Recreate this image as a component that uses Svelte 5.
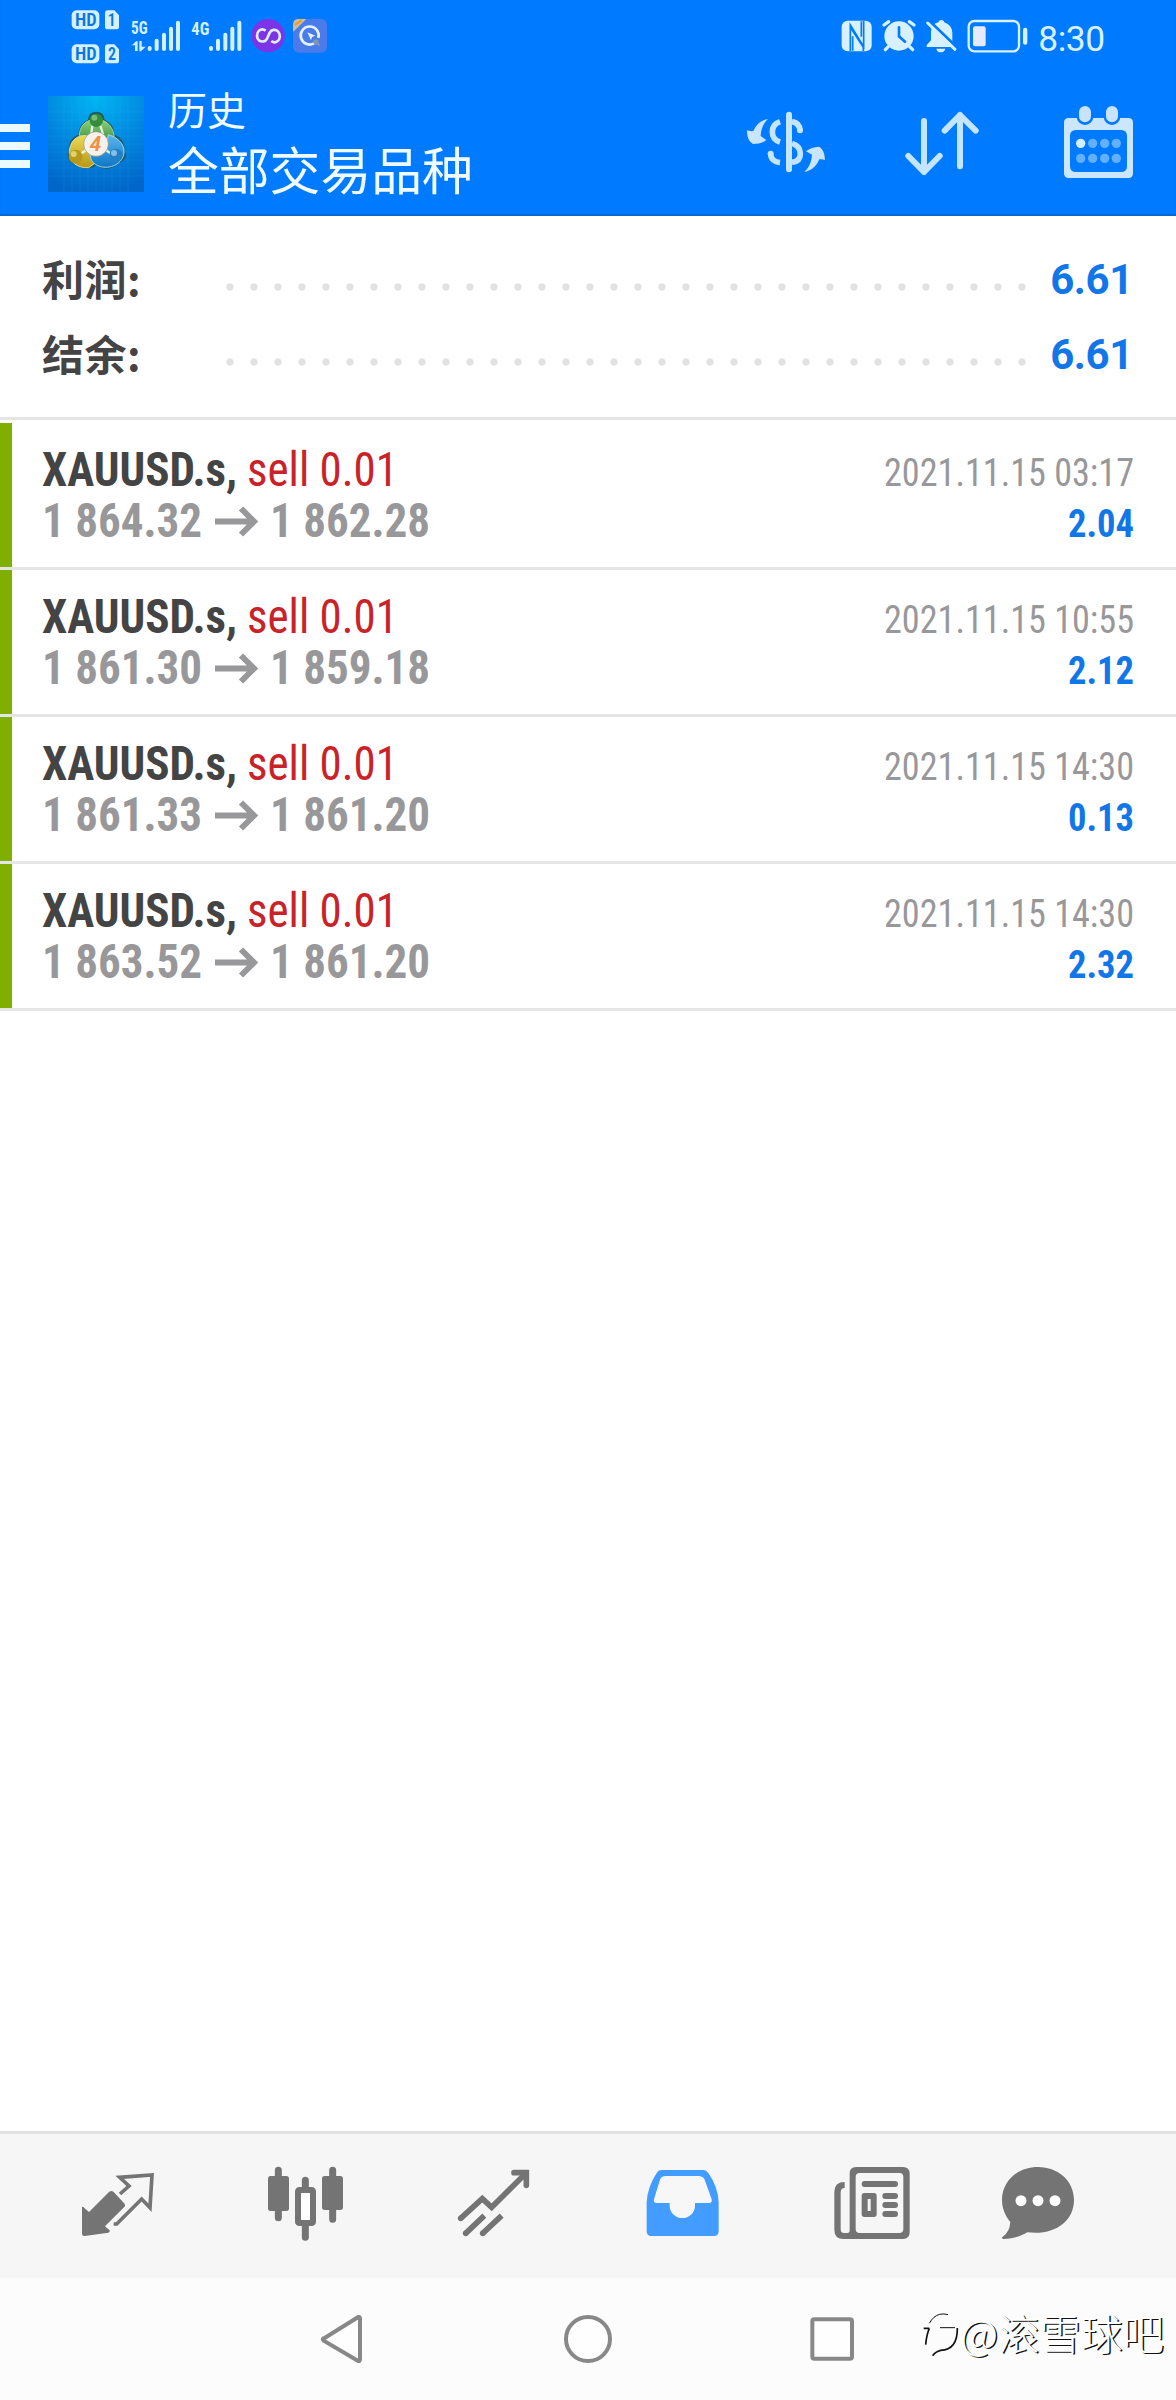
<script>
	const summary = [
		{ label: '利润:', value: '6.61' },
		{ label: '结余:', value: '6.61' }
	];

	const deals = [
		{ open: '1 864.32', close: '1 862.28', time: '2021.11.15 03:17', profit: '2.04' },
		{ open: '1 861.30', close: '1 859.18', time: '2021.11.15 10:55', profit: '2.12' },
		{ open: '1 861.33', close: '1 861.20', time: '2021.11.15 14:30', profit: '0.13' },
		{ open: '1 863.52', close: '1 861.20', time: '2021.11.15 14:30', profit: '2.32' }
	];

	const calendarDots = [1082, 1118, 1154, 1189];
</script>

<main class="screen">
	<header class="header">
		<div class="status">
			<svg width="300" height="72" viewBox="0 0 900 216" fill="#d3f0ff">
				<rect x="65" y="31" width="83" height="57" rx="15" />
				<rect x="65" y="133" width="83" height="57" rx="15" />
				<path d="M173 31h20l14 15v34q0 8-8 8h-26q-8 0-8-8v-41q0-8 8-8zM173 133h20l14 15v34q0 8-8 8h-26q-8 0-8-8v-41q0-8 8-8z" />
				<g class="badge">
					<text x="75" y="79" textLength="65" lengthAdjust="spacingAndGlyphs">HD</text>
					<text x="75" y="181" textLength="65" lengthAdjust="spacingAndGlyphs">HD</text>
					<text x="173" y="79" textLength="24" lengthAdjust="spacingAndGlyphs">1</text>
					<text x="174" y="181" textLength="24" lengthAdjust="spacingAndGlyphs">2</text>
				</g>
				<g class="net">
					<text x="243" y="102" textLength="50" lengthAdjust="spacingAndGlyphs">5G</text>
					<text x="424" y="104" textLength="54" lengthAdjust="spacingAndGlyphs">4G</text>
				</g>
				<path d="M244 137l14-13h5v29h-8v-17h-11zM268 123h7v17h12l-14 14h-5z" />
				<g stroke="#d3f0ff" stroke-width="12" stroke-linecap="round">
					<path d="M299 144v3M320 122v25M342 104v43M363 86v61M384 68v79" />
					<path d="M483 144v3M504 122v25M526 104v43M547 86v61M568 68v79" />
				</g>
				<circle cx="654" cy="107" r="50" fill="#7c35e6" />
				<path d="M647 92c-7-5-14-5-20 0-8 8-8 22 0 29 8 6 20 4 24-5l8-18c5-10 18-11 25-4 8 9 7 23-1 29-6 5-14 4-19 0" fill="none" stroke="#e2ecff" stroke-width="8" />
				<rect x="729" y="57" width="102" height="101" rx="17" fill="#4b7bea" />
				<path d="M729 96V74q0-17 17-17h23z" fill="#ccbda5" />
				<path d="M734 75l21-14" stroke="#e9a136" stroke-width="8" />
				<path d="M794 129a27 27 0 1 1 11-15" fill="none" stroke="#e5f3ff" stroke-width="8" />
				<path d="M772 97l24 10-10 4-3 10z" fill="#e5f3ff" />
				<circle cx="798" cy="126" r="8" fill="#8396ad" />
				<path d="M802 131l7 5" stroke="#8396ad" stroke-width="6" />
			</svg>
			<svg width="320" height="72" viewBox="0 0 960 216" fill="#d7f1ff">
				<rect x="65" y="62" width="90" height="92" rx="18" />
				<path d="M91 153V75l40 65V63M91 82l39 60V153M98 109v43M124 64v46" fill="none" stroke="#007aff" stroke-width="5" />
				<circle cx="237" cy="108" r="44" />
				<path d="M192 75l14-10M282 75l-14-10M205 140l-9 9M269 140l9 9" stroke="#d7f1ff" stroke-width="10" stroke-linecap="round" />
				<path d="M237 82v27l18 16" fill="none" stroke="#007aff" stroke-width="8" stroke-linecap="round" />
				<path d="M320 141v-6l13-14V96q0-24 22-29 2-7 9-7t9 7q23 8 24 31v25l11 15v3z" />
				<path d="M349 146h27q-3 11-14 11t-13-11z" />
				<path d="M329 64l82 79" stroke="#007aff" stroke-width="9" />
				<path d="M323 69l82 79" stroke="#d7f1ff" stroke-width="9" stroke-linecap="round" />
				<rect x="446" y="63" width="151" height="91" rx="17" fill="none" stroke="#d7f1ff" stroke-width="7" />
				<rect x="459" y="79" width="38" height="60" rx="6" fill="#e5eaff" />
				<rect x="609" y="83" width="13" height="51" rx="6" />
				<text class="clock" x="655" y="152" textLength="200">8:30</text>
			</svg>
		</div>

		<div class="toolbar">
			<div class="menu"><i></i><i></i><i></i></div>
			<svg class="logo" width="96" height="96" viewBox="144 62 288 288">
				<defs>
					<radialGradient id="sky" cx=".5" cy="0" r="1">
						<stop offset="0" stop-color="#00b7f3" />
						<stop offset=".55" stop-color="#0286df" />
						<stop offset="1" stop-color="#0067c9" />
					</radialGradient>
					<linearGradient id="green" x2="0" y2="1">
						<stop offset="0" stop-color="#8ed37c" />
						<stop offset="1" stop-color="#2d8a35" />
					</linearGradient>
					<linearGradient id="gold" x2="0" y2="1">
						<stop offset="0" stop-color="#eadb55" />
						<stop offset="1" stop-color="#b99616" />
					</linearGradient>
					<linearGradient id="blue" x2="0" y2="1">
						<stop offset="0" stop-color="#5db7ee" />
						<stop offset="1" stop-color="#0d76c5" />
					</linearGradient>
				</defs>
				<rect x="144" y="62" width="288" height="288" fill="url(#sky)" />
				<path d="M192 62v288M216 62v288M240 62v288M264 62v288M288 62v288M312 62v288M336 62v288M360 62v288M384 62v288M144 110h288M144 134h288M144 158h288M144 182h288M144 206h288M144 230h288M144 254h288M144 278h288M144 302h288" stroke="#55c4f5" stroke-opacity=".16" stroke-width="2" />
				<path d="M289 112c-15 0-22 10-23 23-20 9-30 27-28 45-21 7-31 25-29 47-9 19 0 32 18 38 18 16 45 16 61 3 22 15 50 13 68-8 20-6 23-20 15-35 1-23-12-40-31-46 2-19-7-34-28-44-1-13-8-23-23-23z" fill="#1c5f6b" stroke="#1c5f6b" stroke-width="5" />
				<g stroke-width="3">
					<path d="M238 181c0-27 18-49 51-49s54 27 53 56l-11 20-43-38-34 16z" fill="url(#green)" stroke="#a9d0a2" />
					<path d="M259 181c-31-3-51 19-51 52 0 28 26 46 58 44l22-16-34-42z" fill="url(#gold)" stroke="#dbd8a4" />
					<path d="M325 178c27 8 48 27 47 52-2 36-43 53-73 43-18-6-28-17-28-34l45-10z" fill="url(#blue)" stroke="#a5d7f3" />
				</g>
				<path d="M277 151l-3 24M301 151l8 25M240 237l19-13M334 237l-17-14" stroke="#e5f2e3" stroke-width="7" />
				<circle cx="289" cy="135" r="20" fill="#338b3b" />
				<circle cx="283" cy="127" r="9" fill="#a6daa2" opacity=".6" />
				<circle cx="227" cy="244" r="21" fill="#b79a1b" />
				<circle cx="221" cy="236" r="9" fill="#f5ea8c" opacity=".7" />
				<circle cx="348" cy="240" r="20" fill="#2181c7" />
				<circle cx="342" cy="233" r="9" fill="#afddf7" opacity=".7" />
				<circle cx="288" cy="206" r="37" fill="#f5f2ee" stroke="#9a8b6b" stroke-width="2" />
				<text class="four" x="269" y="227">4</text>
			</svg>
			<div class="titles">
				<div class="title">历史</div>
				<div class="subtitle">全部交易品种</div>
			</div>
			<div class="actions">
				<svg width="90" height="90" viewBox="63 27 270 270" fill="#c9e4fd">
					<path d="M207 74v164" stroke="#c4e5ff" stroke-width="18" stroke-linecap="round" />
					<path d="M180 95q-23 8-23 31t23 30M216 95c14 2 23 11 24 26M152 191c0 15 10 25 28 27M216 160q25 8 25 31t-25 26" fill="none" stroke="#c4e5ff" stroke-width="17" />
					<circle cx="240" cy="121" r="9" />
					<circle cx="152" cy="191" r="9" />
					<path d="M144 87c-19 3-35 15-44 36-6 1-13 0-19-2 0 18 4 33 18 41 15 0 28-3 40-12l-17-12c1-21 8-38 22-51z" />
					<path d="M253 246c19-3 36-16 45-38 6-1 12 0 17 2-1-18-5-33-18-40-15 1-28 5-39 14l18 10c-1 21-9 38-23 52z" />
				</svg>
				<svg width="90" height="90" viewBox="531 27 270 270" fill="none" stroke="#c4e5ff" stroke-width="18" stroke-linecap="round" stroke-linejoin="round">
					<path d="M612 93v153M565 198l47 48 47-48M720 229V75M674 122l46-47 47 47" />
				</svg>
				<svg width="90" height="90" viewBox="999 27 270 270">
					<path d="M1046 84h179q14 0 14 14v152q0 14-14 14h-179q-14 0-14-14V98q0-14 14-14zM1068 120q-18 0-18 18v90q0 18 18 18h135q18 0 18-18v-90q0-18-18-18z" fill="#cbe6ff" fill-rule="evenodd" />
					<path d="M1095 69v11M1176 69v11" stroke="#007aff" stroke-width="50" stroke-linecap="round" />
					<path d="M1095 66v13M1176 66v13" stroke="#c9e3ff" stroke-width="36" stroke-linecap="round" />
					{#each calendarDots as x, i}
						<circle cx={x} cy="160" r="14" fill={i === 0 ? '#d3efff' : '#62b1ff'} />
						<circle cx={x} cy="205" r="14" fill="#62b1ff" />
					{/each}
				</svg>
			</div>
		</div>
	</header>

	<section class="summary">
		{#each summary as item}
			<div class="total">
				<span class="label">{item.label}</span>
				<span class="dots"></span>
				<span class="value">{item.value}</span>
			</div>
		{/each}
	</section>

	<section class="deals">
		{#each deals as deal}
			<div class="deal">
				<svg width="400" height="144">
					<text class="symbol" x="0" y="63" textLength="195" lengthAdjust="spacingAndGlyphs">XAUUSD.s,</text>
					<text class="side" x="205" y="63" textLength="151" lengthAdjust="spacingAndGlyphs">sell 0.01</text>
					<text class="price" x="0" y="113.500" textLength="160" lengthAdjust="spacingAndGlyphs">{deal.open}</text>
					<path d="M173 98.500h39M199 85.500l13 13-13 13" fill="none" stroke="#98989a" stroke-width="6" />
					<text class="price" x="228" y="113.500" textLength="160" lengthAdjust="spacingAndGlyphs">{deal.close}</text>
				</svg>
				<svg width="272" height="144">
					<text class="time" x="10" y="63" textLength="250" lengthAdjust="spacingAndGlyphs">{deal.time}</text>
					<text class="profit" x="194" y="114" textLength="66" lengthAdjust="spacingAndGlyphs">{deal.profit}</text>
				</svg>
			</div>
		{/each}
	</section>

	<nav class="tabs">
		<!-- quotes -->
		<svg viewBox="60 114 288 288">
			<path d="M96 260q5 0 7 4l14 12 60-60q7-6 14 0l30 32q8 8 1 14l-57 57 14 12q2 6-4 7l-71 10q-8 1-8-7z" />
			<path d="M210 222l27-24-28-26 97-7-6 98-25-26-75 75h-9" fill="none" stroke="#747474" stroke-width="11" />
		</svg>
		<!-- chart -->
		<svg viewBox="624 114 288 288">
			<path d="M685 151v142M848 151v147M766 181v30M766 310v42" stroke="#747474" stroke-width="21" stroke-linecap="round" />
			<rect x="654" y="168" width="63" height="105" rx="8" />
			<rect x="816" y="168" width="63" height="102" rx="8" />
			<rect x="744" y="210" width="45" height="99" rx="4" fill="none" stroke="#747474" stroke-width="18" />
			<rect x="753" y="219" width="27" height="81" rx="8" fill="#fff" />
		</svg>
		<!-- trade -->
		<svg viewBox="48 114 288 288" fill="none" stroke="#747474" stroke-width="17">
			<path d="M92 295l65-59 28 26L286 161" />
			<path d="M252 158h37v38" stroke-linecap="round" />
			<path d="M107 340l56-53M158 340l57-53" />
			<g fill="#747474" stroke="none">
				<circle cx="92" cy="295" r="8.500" />
				<circle cx="107" cy="340" r="8.500" />
				<circle cx="158" cy="340" r="8.500" />
			</g>
		</svg>
		<!-- history -->
		<svg viewBox="612 114 288 288">
			<path d="M694 150h126q9 0 15 9 30 43 31 88v87q0 14-14 14H664q-14 0-14-14v-87q2-45 30-88 5-9 14-9z" fill="#439cff" />
			<path d="M707 168h99q13 0 18 11l21 59q2 11-8 11h-42v8a38 37 0 0 1-76 0v-8h-39q-11 0-8-11l18-59q4-11 17-11z" fill="#f7f7f7" />
		</svg>
		<!-- news -->
		<svg viewBox="126 114 288 288">
			<path d="M228 141h141q20 0 20 20v176q0 20-20 20H191q-28 0-28-28V215q0-29 31-29v18q-12 0-12 13v110q0 12 10 12h10q7 0 7-8V161q0-20 19-20zM239 159q-12 0-12 12v156q0 12 12 12h119q12 0 12-12V171q0-12-12-12z" fill-rule="evenodd" />
			<path d="M254 192h91M316 228h29M316 255h29M316 282h29" stroke="#747474" stroke-width="18" stroke-linecap="round" />
			<path d="M253 219h29q8 0 8 8v56q0 8-8 8h-29q-8 0-8-8v-56q0-8 8-8zM263 237v36h9v-36z" fill-rule="evenodd" />
		</svg>
		<!-- messages -->
		<svg viewBox="630 114 288 288">
			<path d="M774 141c62 0 108 43 108 99 0 63-56 107-140 97-20 12-42 19-72 20q-8-3 0-8 19-14 21-43c-16-19-25-42-25-66 0-58 48-99 108-99z" />
			<g fill="#fff">
				<circle cx="723" cy="242" r="16.500" />
				<circle cx="774" cy="242" r="16.500" />
				<circle cx="825" cy="242" r="16.500" />
			</g>
		</svg>
	</nav>

	<footer class="system">
		<svg viewBox="99 117 180 180">
			<path d="M129 207l106-66q5-1 5 5v122q0 6-5 5L131 212q-5-4 0-8z" />
		</svg>
		<svg viewBox="834 117 180 180">
			<circle cx="924" cy="207" r="66" />
		</svg>
		<svg viewBox="81 117 180 180">
			<rect x="109" y="148" width="119" height="118" rx="6" />
		</svg>
		<div class="mark">
			<svg class="ball" viewBox="435 132 114 144">
				<path d="M440 187h17M457 187q-8 18-11 49M541 186q1 65-50 67-16 4-24 16" />
				<path d="M489 185h45M457 172q12-22 31-27 13-3 25 1" stroke-width="3" />
			</svg>
			<span>@滚雪球吧</span>
		</div>
	</footer>
</main>

<style>
	:global(body) {
		margin: 0;
		background: #fff;
	}

	.screen {
		display: flex;
		flex-direction: column;
		width: 1176px;
		height: 2400px;
		background: #fff;
		font-family: Roboto, "Noto Sans CJK SC", sans-serif;
		overflow: hidden;
	}

	svg {
		display: block;
		flex: none;
	}

	.header {
		height: 216px;
		background: #007aff;
		box-shadow: inset 0 -2px 1px #0869d2;
	}

	.status {
		display: flex;
		justify-content: space-between;
		height: 72px;
		padding: 0 36px 0 50px;
	}

	.badge {
		fill: #0878dd;
		font-size: 56px;
		font-weight: 600;
	}

	.net {
		font-size: 56px;
		font-weight: 700;
	}

	.badge text,
	.net text {
		font-family: "Roboto Condensed", Roboto, sans-serif;
		font-stretch: condensed;
	}

	.clock {
		font-size: 106px;
	}

	.toolbar {
		display: flex;
		align-items: center;
		height: 144px;
	}

	.menu {
		display: flex;
		flex-direction: column;
		gap: 10px;
		width: 30px;
		padding-top: 4px;
		margin-right: 18px;
	}

	.menu i {
		height: 8px;
		background: #ebfaff;
	}

	.four {
		fill: #ee9144;
		font-size: 62px;
		font-weight: 700;
		font-style: italic;
	}

	.titles {
		padding-top: 10px;
		margin-left: 24px;
		color: #f0fbff;
		white-space: nowrap;
	}

	.title {
		font-size: 39px;
		line-height: 48px;
	}

	.subtitle {
		font-size: 50.800px;
		line-height: 74px;
	}

	.actions {
		display: grid;
		grid-template-columns: repeat(3, 156px);
		justify-items: center;
		margin-left: auto;
	}

	.summary {
		height: 175px;
		padding: 26px 43px 0 42px;
		border-bottom: 3px solid #e5e5e5;
	}

	.total {
		display: flex;
		align-items: center;
		height: 75px;
	}

	.label {
		width: 176px;
		margin-top: -5px;
		color: #444;
		font-size: 42px;
		font-weight: 700;
		font-family: "Noto Sans CJK SC", sans-serif;
		letter-spacing: .5px;
		line-height: 75px;
	}

	.dots {
		width: 816px;
		height: 24px;
		margin-top: 15px;
		background: radial-gradient(circle, #e2e2e2 3.2px, transparent 4.2px) 0 0 / 24px 24px;
	}

	.value {
		margin-left: auto;
		color: #1176e8;
		font-size: 42px;
		font-weight: 700;
		letter-spacing: -.4px;
	}

	.deals {
		padding-top: 3px;
	}

	.deal {
		display: flex;
		justify-content: space-between;
		height: 144px;
		padding: 0 30px 0 42px;
		border-bottom: 3px solid #e5e5e5;
		box-shadow: inset 12px 0 #7fb000;
	}

	.deal text {
		font-family: "Roboto Condensed", Roboto, sans-serif;
		font-stretch: condensed;
	}

	.symbol {
		fill: #444;
		font-size: 48px;
		font-weight: 700;
	}

	.side {
		fill: #ca2229;
		font-size: 48px;
	}

	.price {
		fill: #98989a;
		font-size: 48px;
		font-weight: 700;
	}

	.time {
		fill: #98989a;
		font-size: 39px;
	}

	.profit {
		fill: #1176e8;
		font-size: 39px;
		font-weight: 700;
	}

	.tabs {
		display: grid;
		grid-template-columns: repeat(5, 188px) 148px;
		align-items: center;
		justify-items: center;
		height: 144px;
		margin-top: auto;
		padding-left: 24px;
		border-top: 3px solid #e2e2e2;
		background: #f6f6f6;
		fill: #747474;
	}

	.tabs svg {
		width: 96px;
		height: 96px;
	}

	.system {
		position: relative;
		display: grid;
		grid-template-columns: repeat(3, 245px);
		align-items: center;
		justify-items: center;
		height: 122px;
		padding-left: 220px;
		background: #fcfcfc;
	}

	.system svg {
		width: 60px;
		height: 60px;
		fill: #fefefe;
		stroke: #888;
		stroke-width: 12;
	}

	/* watermark lying over the system bar */
	.mark {
		position: absolute;
		right: 12px;
		bottom: 38px;
		display: flex;
		align-items: center;
		color: #fff;
		font-size: 41.500px;
		font-weight: 300;
		line-height: 60px;
		white-space: nowrap;
		font-family: "Noto Sans CJK SC", sans-serif;
		text-shadow: 1.500px 1px 0 #111;
	}

	.system .ball {
		width: 38px;
		height: 48px;
		margin-top: 4px;
		fill: none;
		stroke: #111;
		stroke-width: 5;
	}
</style>
